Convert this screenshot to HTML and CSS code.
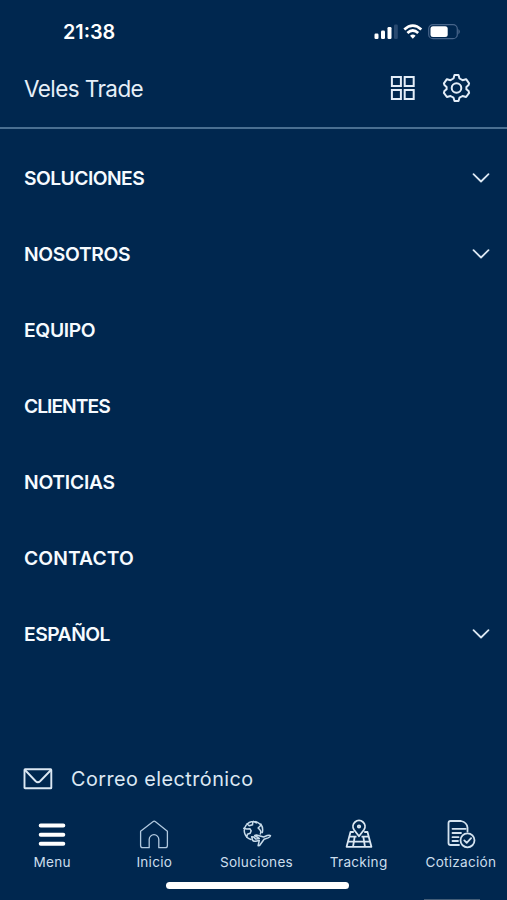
FILE: index.html
```html
<!DOCTYPE html>
<html lang="es">
<head>
<meta charset="utf-8">
<meta name="viewport" content="width=device-width, initial-scale=1">
<title>Veles Trade</title>
<link rel="stylesheet" href="styles.css">
</head>
<body>
<div class="app">
  <div class="status">
    <span class="time">21:38</span>
    <svg class="signals" width="88" height="20" viewBox="374 22 88 20" fill="#fff">
      <rect x="374.5" y="33.5" width="4" height="5.5" rx="1.2"/><rect x="381" y="30.5" width="4" height="8.5" rx="1.2"/><rect x="387.500" y="27" width="4" height="12" rx="1.2"/><rect x="394" y="24.500" width="3.800" height="14.500" rx="1.2" fill="#294a70"/>
      <g fill="none" stroke="#fff" stroke-width="2.700"><path d="M404.300 29.600Q412.800 21.800 421.300 29.600"/><path d="M407.400 33Q412.800 28 418.200 33"/></g>
      <path d="M410 35.700Q412.800 33.400 415.600 35.700L412.800 38.700Z"/>
      <rect x="428.700" y="24.700" width="28.600" height="14" rx="4.300" fill="none" stroke="#47658a" stroke-width="1.200"/>
      <rect x="430.500" y="26.300" width="17.200" height="10.800" rx="2.500"/><path d="M458.500 29q2.400 2.700 0 5.400Z" fill="#5c7594"/>
    </svg>
  </div>
  <header class="header">
    <h1 class="title">Veles Trade</h1>
    <svg class="tools" width="82" height="30" viewBox="390 73 82 30" fill="none" stroke="#e3edf8" stroke-width="2">
      <path d="M391.900 76.900h9v9h-9zM404.700 76.900h9v9h-9zM391.900 90.100h9v9h-9zM404.700 90.100h9v9h-9z"/>
      <g stroke-linejoin="round"><path d="M454.500 75h4l1 3.500 3 1.700 3.600-1 3 4.100-.5 1.800-2.200 1.900v2.200l2.200 1.900.5 1.800-3 4.100-3.600-1-3 1.700-1 3.300h-4l-1-3.300-3-1.700-3.600 1-3-4.100.5-1.800 2.200-1.900v-2.200l-2.200-1.900-.5-1.800 3-4.100 3.600 1 3-1.700z"/><circle cx="456.500" cy="88" r="4.800"/></g>
    </svg>
  </header>
  <nav class="menu">
    <a class="item soluciones"><span>SOLUCIONES</span><svg class="chevron" viewBox="0 0 18 12"><path d="M1.500 2.200 9 9.500l7.500-7.300"/></svg></a>
    <a class="item nosotros"><span>NOSOTROS</span><svg class="chevron" viewBox="0 0 18 12"><path d="M1.500 2.200 9 9.500l7.500-7.300"/></svg></a>
    <a class="item equipo"><span>EQUIPO</span></a>
    <a class="item clientes"><span>CLIENTES</span></a>
    <a class="item noticias"><span>NOTICIAS</span></a>
    <a class="item contacto"><span>CONTACTO</span></a>
    <a class="item espanol"><span>ESPAÑOL</span><svg class="chevron" viewBox="0 0 18 12"><path d="M1.500 2.200 9 9.500l7.500-7.300"/></svg></a>
  </nav>
  <a class="mail">
    <svg width="30" height="22" viewBox="0 0 30 22" fill="none" stroke="#dce8f3" stroke-width="1.900"><rect x="1.500" y="1.300" width="26.800" height="19" rx=".6"/><path d="M2 2l10.700 11.200q2.200 2 4.400 0L28 2"/></svg>
    <span>Correo electrónico</span>
  </a>
  <footer class="tabs">
    <a class="tab t-menu"><svg viewBox="0 0 32 32" fill="none" stroke="#fff" stroke-width="4" stroke-linecap="round"><path d="M4.700 7.600h22.600M4.700 16.800h22.600M4.700 25.800h22.600"/></svg><span>Menu</span></a>
    <a class="tab t-inicio"><svg viewBox="0 0 32 32" fill="none" stroke="#b1c9df" stroke-width="1.300" stroke-linejoin="round"><path d="M2.600 13.200 14.900 3.700q1.300-1 2.600 0L29.400 13.200V27.500q0 2.200-2.200 2.200H20.800V21.500a4.800 4.800 0 0 0-9.600 0v8.200H4.800q-2.200 0-2.200-2.200Z"/></svg><span>Inicio</span></a>
    <a class="tab t-sol"><svg viewBox="0 0 32 32" fill="none" stroke="#c7dbea" stroke-width="1.500" stroke-linecap="round" stroke-linejoin="round"><path d="M20.300 16q1.300-2.500-.7-4.500l-1.500-1.500 2.300-2.200M21 7.300A9.200 9.200 0 1 0 11 21.500M20.800 6q2.700 4 1.500 8.500M7 5.700l2.200 2 3.300-.9.300-2.800M3.800 10.300l3 .7 3.200-.2 1.200 2-1 2.500-2.800 1-.6 3M13.300 3.400l3 1.500"/><path d="M11.700 18.700l2.200.4 2 2 3.400-.6-4.600-3 1.700-.5 7.300 2 3.500-1.500q2.500-.8 3.300.2-.2 1.400-2.400 2.200l-4 1.300-4.500 6.300-1.500.2 1.200-5.300-3.600.8q-2.400.4-3-.8Z"/></svg><span>Soluciones</span></a>
    <a class="tab t-track"><svg viewBox="0 0 32 32" fill="none" stroke="#dce8f3" stroke-width="1.800" stroke-linejoin="round"><path d="M16 18.200 11 11.800a6 6 0 1 1 10 0Z"/><circle cx="16" cy="8.500" r="1.200"/><path d="M10.800 14H7.500L3.600 28.800H28.400L24.500 14H21.200M6.500 18.700h7M18.500 18.700h7M5 23.600h22M11.700 18.700 10 28.800M20.300 18.700 22 28.800"/></svg><span>Tracking</span></a>
    <a class="tab t-cot"><svg viewBox="0 0 32 32" fill="none" stroke="#d4e3f0" stroke-width="1.800" stroke-linecap="round" stroke-linejoin="round"><path d="M14 27H5.500q-2 0-2-2V5q0-2 2-2H16q6 1.500 6.500 6.500v4M7.500 10.800H20.500M7.500 15h8.500M7.500 19.200h6M7.500 23h5.500"/><circle cx="22.500" cy="22.300" r="7"/><path d="m19.300 22.400 2.400 2.400 4.400-4.600"/></svg><span>Cotización</span></a>
  </footer>
  <div class="home"></div>
  <div class="edge"></div>
</div>
</body>
</html>
```
FILE: styles.css
```css
* { box-sizing: border-box; }
body { margin: 0; background: #00274f; }
.app { width: 507px; height: 900px; display: flex; flex-direction: column; overflow: hidden; background: #00274f; color: #fff; font-family: Inter, "Open Sans", sans-serif; }
.status { height: 64px; padding: 22px 45px 0 63px; display: flex; justify-content: space-between; align-items: flex-start; flex: none; }
.time { font-size: 19.8px; line-height: 20px; font-weight: 600; }
.header { height: 65px; padding: 9px 35px 0 24px; display: flex; justify-content: space-between; align-items: flex-start; border-bottom: 2px solid #4a6f91; flex: none; }
.title { margin: 0; font-size: 22.5px; line-height: 31px; font-weight: 400; letter-spacing: -.58px; color: #e6eff8; }
.menu { height: 570px; padding-top: 11px; flex: none; }
.item { height: 76px; padding: 0 17px 0 24px; display: flex; justify-content: space-between; align-items: center; font-size: 19.3px; font-weight: 600; color: #f6fbff; }
.soluciones { letter-spacing: -.55px; }
.nosotros { letter-spacing: -.32px; }
.equipo { letter-spacing: -.35px; }
.clientes { letter-spacing: -1px; }
.noticias { letter-spacing: -.25px; }
.contacto { letter-spacing: .1px; }
.espanol { letter-spacing: -.5px; }
.chevron { width: 18px; height: 12px; fill: none; stroke: #dce8f3; stroke-width: 1.8; stroke-linecap: round; stroke-linejoin: round; }
.mail { height: 111px; padding: 69px 0 0 23px; display: flex; align-items: flex-start; gap: 18px; font-size: 19.8px; line-height: 22px; letter-spacing: .46px; color: #dce8f3; flex: none; }
.tabs { height: 72px; display: grid; grid-template-columns: repeat(5, 102.2px); padding: 8px 0 0 1px; flex: none; }
.tab { display: flex; flex-direction: column; align-items: center; font-size: 13.6px; line-height: 18px; letter-spacing: .25px; color: #ccdeed; }
.tab svg { width: 32px; height: 32px; margin-bottom: 3px; }
.home { width: 183px; height: 7px; margin-left: 166px; border-radius: 4px; background: #fff; flex: none; }
.edge { width: 56px; height: 1px; margin: 10px 0 0 424px; background: #445e78; flex: none; }
```
